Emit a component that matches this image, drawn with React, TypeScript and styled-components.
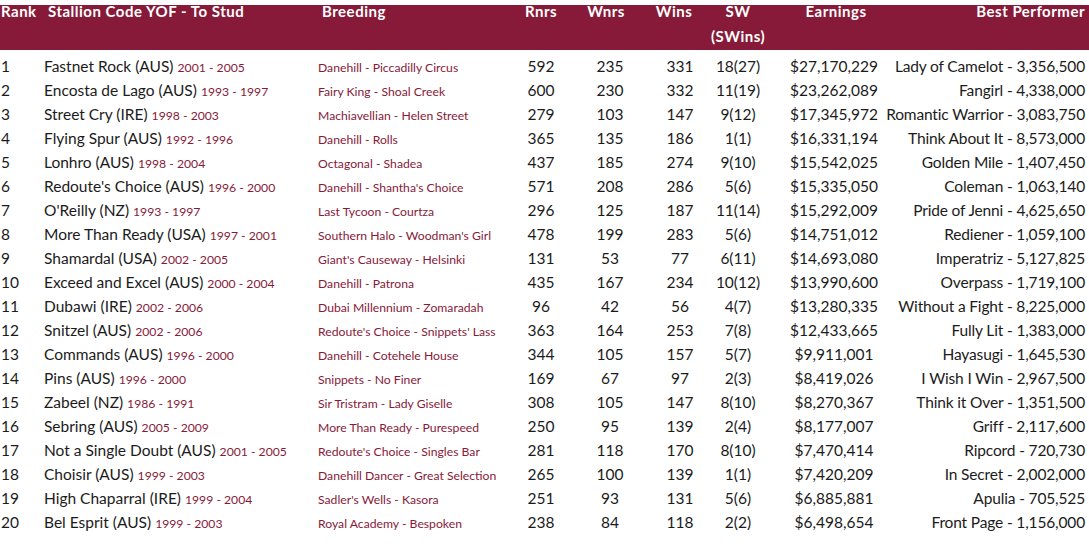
import React from "react";
import styled, { createGlobalStyle } from "styled-components";

const GlobalStyle = createGlobalStyle`
  html, body {
    margin: 0;
    padding: 0;
    background: #ffffff;
  }
  body {
    font-family: Lato, "Liberation Sans", Arial, sans-serif;
    color: #1b1b1b;
  }
`;

const MAROON = "#861a38";
const COLUMNS = "44px 274px 192px 62px 76px 64px 52px 140px minmax(0, 1fr)";

interface IStallion {
  name: string;
  years: string;
  breeding: string;
  rnrs: number;
  wnrs: number;
  wins: number;
  sw: string;
  earnings: string;
  best: string;
}

const stallions: Array<IStallion> = [
  { name: "Fastnet Rock (AUS)", years: "2001 - 2005", breeding: "Danehill - Piccadilly Circus", rnrs: 592, wnrs: 235, wins: 331, sw: "18(27)", earnings: "$27,170,229", best: "Lady of Camelot - 3,356,500" },
  { name: "Encosta de Lago (AUS)", years: "1993 - 1997", breeding: "Fairy King - Shoal Creek", rnrs: 600, wnrs: 230, wins: 332, sw: "11(19)", earnings: "$23,262,089", best: "Fangirl - 4,338,000" },
  { name: "Street Cry (IRE)", years: "1998 - 2003", breeding: "Machiavellian - Helen Street", rnrs: 279, wnrs: 103, wins: 147, sw: "9(12)", earnings: "$17,345,972", best: "Romantic Warrior - 3,083,750" },
  { name: "Flying Spur (AUS)", years: "1992 - 1996", breeding: "Danehill - Rolls", rnrs: 365, wnrs: 135, wins: 186, sw: "1(1)", earnings: "$16,331,194", best: "Think About It - 8,573,000" },
  { name: "Lonhro (AUS)", years: "1998 - 2004", breeding: "Octagonal - Shadea", rnrs: 437, wnrs: 185, wins: 274, sw: "9(10)", earnings: "$15,542,025", best: "Golden Mile - 1,407,450" },
  { name: "Redoute's Choice (AUS)", years: "1996 - 2000", breeding: "Danehill - Shantha's Choice", rnrs: 571, wnrs: 208, wins: 286, sw: "5(6)", earnings: "$15,335,050", best: "Coleman - 1,063,140" },
  { name: "O'Reilly (NZ)", years: "1993 - 1997", breeding: "Last Tycoon - Courtza", rnrs: 296, wnrs: 125, wins: 187, sw: "11(14)", earnings: "$15,292,009", best: "Pride of Jenni - 4,625,650" },
  { name: "More Than Ready (USA)", years: "1997 - 2001", breeding: "Southern Halo - Woodman's Girl", rnrs: 478, wnrs: 199, wins: 283, sw: "5(6)", earnings: "$14,751,012", best: "Rediener - 1,059,100" },
  { name: "Shamardal (USA)", years: "2002 - 2005", breeding: "Giant's Causeway - Helsinki", rnrs: 131, wnrs: 53, wins: 77, sw: "6(11)", earnings: "$14,693,080", best: "Imperatriz - 5,127,825" },
  { name: "Exceed and Excel (AUS)", years: "2000 - 2004", breeding: "Danehill - Patrona", rnrs: 435, wnrs: 167, wins: 234, sw: "10(12)", earnings: "$13,990,600", best: "Overpass - 1,719,100" },
  { name: "Dubawi (IRE)", years: "2002 - 2006", breeding: "Dubai Millennium - Zomaradah", rnrs: 96, wnrs: 42, wins: 56, sw: "4(7)", earnings: "$13,280,335", best: "Without a Fight - 8,225,000" },
  { name: "Snitzel (AUS)", years: "2002 - 2006", breeding: "Redoute's Choice - Snippets' Lass", rnrs: 363, wnrs: 164, wins: 253, sw: "7(8)", earnings: "$12,433,665", best: "Fully Lit - 1,383,000" },
  { name: "Commands (AUS)", years: "1996 - 2000", breeding: "Danehill - Cotehele House", rnrs: 344, wnrs: 105, wins: 157, sw: "5(7)", earnings: "$9,911,001", best: "Hayasugi - 1,645,530" },
  { name: "Pins (AUS)", years: "1996 - 2000", breeding: "Snippets - No Finer", rnrs: 169, wnrs: 67, wins: 97, sw: "2(3)", earnings: "$8,419,026", best: "I Wish I Win - 2,967,500" },
  { name: "Zabeel (NZ)", years: "1986 - 1991", breeding: "Sir Tristram - Lady Giselle", rnrs: 308, wnrs: 105, wins: 147, sw: "8(10)", earnings: "$8,270,367", best: "Think it Over - 1,351,500" },
  { name: "Sebring (AUS)", years: "2005 - 2009", breeding: "More Than Ready - Purespeed", rnrs: 250, wnrs: 95, wins: 139, sw: "2(4)", earnings: "$8,177,007", best: "Griff - 2,117,600" },
  { name: "Not a Single Doubt (AUS)", years: "2001 - 2005", breeding: "Redoute's Choice - Singles Bar", rnrs: 281, wnrs: 118, wins: 170, sw: "8(10)", earnings: "$7,470,414", best: "Ripcord - 720,730" },
  { name: "Choisir (AUS)", years: "1999 - 2003", breeding: "Danehill Dancer - Great Selection", rnrs: 265, wnrs: 100, wins: 139, sw: "1(1)", earnings: "$7,420,209", best: "In Secret - 2,002,000" },
  { name: "High Chaparral (IRE)", years: "1999 - 2004", breeding: "Sadler's Wells - Kasora", rnrs: 251, wnrs: 93, wins: 131, sw: "5(6)", earnings: "$6,885,881", best: "Apulia - 705,525" },
  { name: "Bel Esprit (AUS)", years: "1999 - 2003", breeding: "Royal Academy - Bespoken", rnrs: 238, wnrs: 84, wins: 118, sw: "2(2)", earnings: "$6,498,654", best: "Front Page - 1,156,000" },
];

const Table = styled.div`
  width: 1089px;
  padding-top: 5px;
`;

const HeaderRow = styled.div`
  display: grid;
  grid-template-columns: ${COLUMNS};
  height: 45px;
  background: ${MAROON};
  color: #ffffff;
  font-weight: 700;
  font-size: 15px;
  letter-spacing: 0.5px;
  line-height: 25px;
`;

type Align = "left" | "center" | "right";

const justify = (a?: Align) =>
  a === "center" ? "center" : a === "right" ? "flex-end" : "flex-start";

const HeadCell = styled.div<{ $align?: Align; $shift?: number }>`
  display: flex;
  flex-direction: column;
  align-items: ${(p) => justify(p.$align)};
  margin-top: -6px;
  padding-left: ${(p) => (p.$align === "left" || !p.$align ? 4 : 0)}px;
  padding-right: ${(p) => (p.$align === "right" ? 4 : 0)}px;
  transform: translateX(${(p) => p.$shift || 0}px);
  white-space: nowrap;

  &:first-child {
    padding-left: 1px;
  }
`;

const Body = styled.div`
  padding-top: 4px;
`;

const Row = styled.div`
  display: grid;
  grid-template-columns: ${COLUMNS};
  height: 24px;
  align-items: baseline;
  line-height: 24px;
`;

const Cell = styled.div<{ $align?: Align }>`
  display: flex;
  justify-content: ${(p) => justify(p.$align)};
  align-items: baseline;
  white-space: nowrap;
  font-size: 15.5px;
  color: #1b1b1b;
`;

const RankCell = styled(Cell)`
  padding-left: 1px;
`;

const Years = styled.span`
  font-size: 12.2px;
  color: ${MAROON};
  margin-left: 4px;
`;

const Breeding = styled(Cell)`
  font-size: 12.2px;
  color: ${MAROON};
`;

const BestCell = styled(Cell)`
  padding-right: 4px;
  letter-spacing: -0.15px;
`;

export default function App() {
  return (
    <>
      <GlobalStyle />
      <Table>
        <HeaderRow>
          <HeadCell>Rank</HeadCell>
          <HeadCell>Stallion Code YOF - To Stud</HeadCell>
          <HeadCell>Breeding</HeadCell>
          <HeadCell $align="center">Rnrs</HeadCell>
          <HeadCell $align="center" $shift={-4}>Wnrs</HeadCell>
          <HeadCell $align="center" $shift={-6}>Wins</HeadCell>
          <HeadCell $align="center">
            <span>SW</span>
            <span>(SWins)</span>
          </HeadCell>
          <HeadCell $align="center" $shift={2}>Earnings</HeadCell>
          <HeadCell $align="right">Best Performer</HeadCell>
        </HeaderRow>
        <Body>
          {stallions.map((s, i) => (
            <Row key={s.name}>
              <RankCell>{i + 1}</RankCell>
              <Cell>
                {s.name}
                <Years>{s.years}</Years>
              </Cell>
              <Breeding>{s.breeding}</Breeding>
              <Cell $align="center">{s.rnrs}</Cell>
              <Cell $align="center">{s.wnrs}</Cell>
              <Cell $align="center">{s.wins}</Cell>
              <Cell $align="center">{s.sw}</Cell>
              <Cell $align="center">{s.earnings}</Cell>
              <BestCell $align="right">{s.best}</BestCell>
            </Row>
          ))}
        </Body>
      </Table>
    </>
  );
}
